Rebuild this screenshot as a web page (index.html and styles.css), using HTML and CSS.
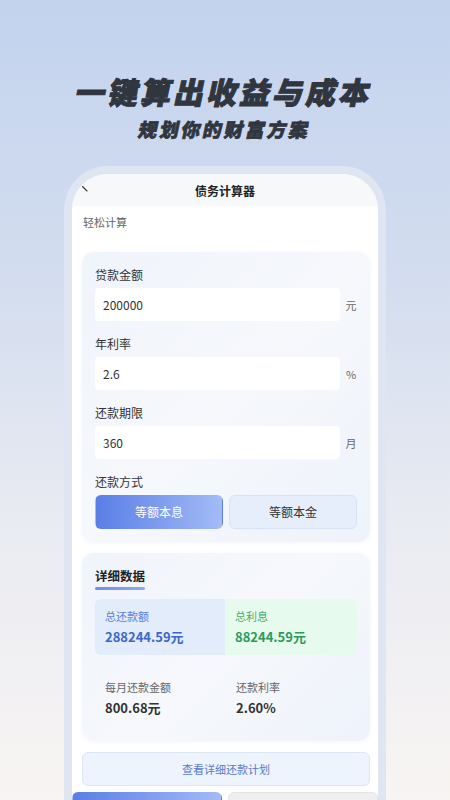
FILE: index.html
```html
<!DOCTYPE html>
<html lang="zh">
<head>
<meta charset="utf-8">
<link rel="stylesheet" href="styles.css">
</head>
<body>
<div class="page">
  <header class="hero">
    <h1 class="hero-title">一键算出收益与成本</h1>
    <p class="hero-sub">规划你的财富方案</p>
  </header>
  <div class="phone">
    <div class="screen">
      <div class="nav">
        <svg class="back" width="6" height="6" viewBox="0 0 6 6"><path d="M0.5 0.5 L5 5" stroke="#333" stroke-width="1.1" stroke-linecap="round"/></svg>
        <span class="nav-title">债务计算器</span>
      </div>
      <div class="content">
        <div class="intro">轻松计算</div>
        <section class="card form-card">
          <div class="field">
            <div class="label">贷款金额</div>
            <div class="input-row"><div class="input">200000</div><span class="unit">元</span></div>
          </div>
          <div class="field">
            <div class="label">年利率</div>
            <div class="input-row"><div class="input">2.6</div><span class="unit">%</span></div>
          </div>
          <div class="field">
            <div class="label">还款期限</div>
            <div class="input-row"><div class="input">360</div><span class="unit">月</span></div>
          </div>
          <div class="field last">
            <div class="label">还款方式</div>
            <div class="toggle">
              <div class="tbtn active">等额本息</div>
              <div class="tbtn">等额本金</div>
            </div>
          </div>
        </section>
        <section class="card detail-card">
          <div class="detail-title">详细数据</div>
          <div class="underline"></div>
          <div class="stats">
            <div class="stat blue">
              <div class="stat-label">总还款额</div>
              <div class="stat-value">288244.59元</div>
            </div>
            <div class="stat green">
              <div class="stat-label">总利息</div>
              <div class="stat-value">88244.59元</div>
            </div>
          </div>
          <div class="stats plain">
            <div class="stat">
              <div class="stat-label">每月还款金额</div>
              <div class="stat-value">800.68元</div>
            </div>
            <div class="stat">
              <div class="stat-label">还款利率</div>
              <div class="stat-value">2.60%</div>
            </div>
          </div>
        </section>
        <div class="plan-btn">查看详细还款计划</div>
      </div>
      <div class="bottom-bar">
        <div class="bbtn primary"></div>
        <div class="bbtn"></div>
      </div>
    </div>
  </div>
</div>
</body>
</html>
```

FILE: styles.css
```css
* { box-sizing: border-box; margin: 0; padding: 0; }
html, body { width: 450px; height: 800px; overflow: hidden; }
body {
  font-family: "Noto Sans CJK SC", "Noto Sans", sans-serif;
  color: #333;
}
.page {
  width: 450px;
  height: 800px;
  overflow: hidden;
  background: linear-gradient(180deg, #c3d3ee 0%, #d3ddef 35%, #e9ebf2 65%, #f8f4f2 100%);
}
.hero { padding-top: 73px; text-align: center; color: #30353e; }
.hero-title {
  font-size: 30px;
  line-height: 36px;
  font-weight: 900;
  letter-spacing: 3px;
  transform: skewX(-12deg);
  -webkit-text-stroke: 1px #30353e;
}
.hero-sub {
  margin-top: 8px;
  font-size: 19px;
  line-height: 24px;
  font-weight: 900;
  letter-spacing: 2.5px;
  transform: skewX(-12deg);
  -webkit-text-stroke: 0.7px #30353e;
}
.phone {
  margin: 25px auto 0;
  width: 322px;
  height: 700px;
  border: 8px solid #dfe6f2;
  border-bottom: none;
  border-radius: 44px 44px 0 0;
}
.screen {
  height: 100%;
  background: #fff;
  border-radius: 36px 36px 0 0;
  overflow: hidden;
}
.nav {
  height: 32px;
  background: #f7f8fa;
  display: flex;
  align-items: center;
  justify-content: center;
  position: relative;
}
.back { position: absolute; left: 10px; top: 12px; }
.nav-title { font-size: 12px; font-weight: 700; color: #222; }
.content { padding: 0 8px 0 10px; }
.intro { padding-top: 8px; font-size: 11px; line-height: 16px; color: #666; padding-left: 1px; }
.card {
  border-radius: 12px;
  background: linear-gradient(135deg, #f0f4fb 0%, #f6f8fc 50%, #eef3fb 100%);
  box-shadow: 0 1px 4px rgba(150, 170, 210, 0.12);
}
.form-card { margin-top: 22px; padding: 16px 13px 13px; }
.field { margin-bottom: 16px; }
.field.last { margin-bottom: 0; }
.label { font-size: 12px; line-height: 14px; color: #333; margin-bottom: 6px; }
.input-row { display: flex; align-items: center; }
.input {
  flex: 1;
  height: 33px;
  background: #fff;
  border-radius: 4px;
  font-size: 12px;
  line-height: 33px;
  padding-left: 8px;
  color: #333;
}
.unit { width: 12px; margin-left: 5px; font-size: 11px; color: #666; text-align: center; }
.toggle { display: flex; gap: 6px; }
.tbtn {
  flex: 1;
  height: 34px;
  border-radius: 6px;
  font-size: 12px;
  line-height: 32px;
  text-align: center;
  background: #e6eefc;
  border: 1px solid #d8e2f5;
  color: #333;
}
.tbtn.active {
  background: linear-gradient(90deg, #5a7ee6 0%, #a3bbf6 100%);
  border-color: transparent;
  color: #fff;
}
.detail-card { margin-top: 11px; padding: 15px 13px 15px; }
.detail-title { font-size: 12.5px; line-height: 16px; font-weight: 700; color: #222; }
.underline { margin-top: 3px; width: 50px; height: 3px; border-radius: 2px; background: linear-gradient(90deg, #6a8fe6, #8aa9ef); }
.stats { display: grid; grid-template-columns: 130px 1fr; margin-top: 9px; }
.stats.plain { margin-top: 15px; }
.stat { padding: 9px 10px; }
.stat.blue { background: #e2ecfb; border-radius: 6px 0 0 6px; }
.stat.green { background: #e6fbee; border-radius: 0 6px 6px 0; }
.stats.plain .stat:last-child { padding-left: 11px; }
.stat-label { font-size: 11px; line-height: 16px; color: #666; }
.stat-value { margin-top: 4px; font-size: 13px; line-height: 18px; font-weight: 700; color: #333; }
.stat.blue .stat-label { color: #5d7ed8; }
.stat.blue .stat-value { color: #3d66c8; }
.stat.green .stat-label { color: #48ad6f; }
.stat.green .stat-value { color: #2c9a5b; }
.plan-btn {
  margin-top: 11px;
  height: 34px;
  border-radius: 6px;
  background: #eef4fd;
  border: 1px solid #dce6f4;
  font-size: 11px;
  line-height: 32px;
  text-align: center;
  color: #5a78cc;
}
.bottom-bar { display: flex; gap: 6px; margin-top: 6px; }
.bbtn {
  flex: 1;
  height: 40px;
  border-radius: 6px 6px 0 0;
  background: #efeff2;
  border: 1px solid #e4e4e8;
}
.bbtn.primary { background: linear-gradient(90deg, #5a7ee6 0%, #a3bbf6 100%); border-color: transparent; }
```
